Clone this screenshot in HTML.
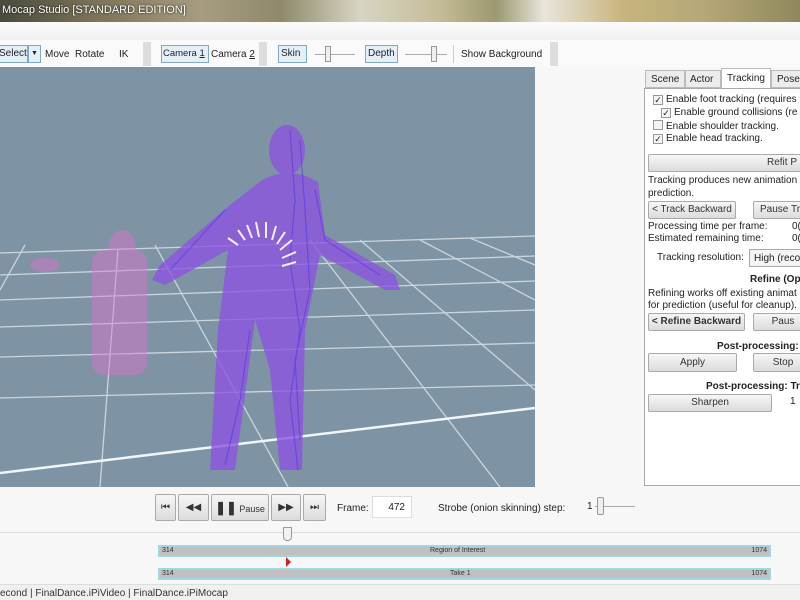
<!DOCTYPE html>
<html><head><meta charset="utf-8"><style>
*{margin:0;padding:0;box-sizing:border-box}
body{width:800px;height:600px;overflow:hidden;background:#f7f7f7;font-family:"Liberation Sans",sans-serif;font-size:10px;color:#222;position:relative}
.a{position:absolute;white-space:nowrap}
.btn{position:absolute;border:1px solid #a9a9a9;border-radius:2px;background:linear-gradient(#f6f6f6,#dcdcdc);text-align:center;color:#333;white-space:nowrap}
.tb{position:absolute;border:1px solid #7fa9c9;background:#e4f0f8;padding:2px 2px;top:45px;height:18px;line-height:12px;white-space:nowrap}
.cb{display:inline-block;width:10px;height:10px;border:1px solid #999;background:#f4f4f4;vertical-align:-1px;margin-right:3px;font-size:9px;line-height:8px;text-align:center}
</style></head><body>
<div class="a" style="left:0;top:0;width:800px;height:22px;background:linear-gradient(90deg,#4a4a3c 0%,#7c7458 12%,#a89c80 25%,#8e8a6a 35%,#d8d4c4 45%,#c4bc96 55%,#9c9870 62%,#e8e6dc 68%,#c8b47c 78%,#b4a878 88%,#90885c 100%)"></div>
<div class="a" style="left:2px;top:4px;color:#fff;font-size:11px;text-shadow:0 0 2px #000">Mocap Studio [STANDARD EDITION]</div>
<div class="a" style="left:0;top:22px;width:800px;height:18px;background:linear-gradient(#fbfbfb,#f0f0f0)"></div>
<div class="a" style="left:0;top:40px;width:800px;height:27px;background:#fafafa"></div>
<div class="tb" style="left:-4px;width:32px">Select</div>
<div class="tb" style="left:28px;width:13px;font-size:7px">▼</div>
<div class="a" style="left:45px;top:49px">Move&nbsp; Rotate</div>
<div class="a" style="left:119px;top:49px">IK</div>
<div class="a" style="left:143px;top:42px;width:8px;height:24px;background:#ddd"></div>
<div class="tb" style="left:161px;width:48px;font-size:9.5px;padding:2px 1px">Camera <u>1</u></div>
<div class="a" style="left:211px;top:49px">Camera <u>2</u></div>
<div class="a" style="left:259px;top:42px;width:8px;height:24px;background:#ddd"></div>
<div class="tb" style="left:278px;width:29px">Skin</div>
<div class="a" style="left:315px;top:54px;width:40px;height:1px;background:#aaa"></div>
<div class="a" style="left:325px;top:46px;width:6px;height:16px;border:1px solid #999;background:#eee"></div>
<div class="tb" style="left:365px;width:33px">Depth</div>
<div class="a" style="left:405px;top:54px;width:42px;height:1px;background:#aaa"></div>
<div class="a" style="left:431px;top:46px;width:6px;height:16px;border:1px solid #999;background:#eee"></div>
<div class="a" style="left:453px;top:45px;width:1px;height:18px;background:#ccc"></div>
<div class="a" style="left:461px;top:49px">Show Background</div>
<div class="a" style="left:550px;top:42px;width:8px;height:24px;background:#ddd"></div>

<svg class="a" style="left:0;top:67px" width="535" height="420" viewBox="0 67 535 420">
<rect x="0" y="67" width="535" height="420" fill="#7e93a3"/>
<g stroke="#e4ecf2" stroke-width="1.3" fill="none" opacity=".75">
<line x1="0" y1="253" x2="535" y2="236"/>
<line x1="0" y1="275" x2="535" y2="256"/>
<line x1="0" y1="300" x2="535" y2="281"/>
<line x1="0" y1="327" x2="535" y2="310"/>
<line x1="0" y1="357" x2="535" y2="343"/>
<line x1="0" y1="398" x2="535" y2="385"/>
<line x1="155" y1="245" x2="288" y2="487"/>
<line x1="25" y1="245" x2="0" y2="290"/>
<line x1="100" y1="487" x2="118" y2="250"/>
<line x1="310" y1="240" x2="500" y2="487"/>
<line x1="360" y1="240" x2="535" y2="390"/>
<line x1="420" y1="240" x2="535" y2="300"/>
<line x1="470" y1="238" x2="535" y2="265"/>
</g>
<line x1="0" y1="473" x2="535" y2="408" stroke="#f2f6f8" stroke-width="2.5"/>
<g fill="#e070d0" opacity=".45">
<ellipse cx="122" cy="250" rx="14" ry="20"/>
<rect x="92" y="250" width="55" height="125" rx="12"/>
<ellipse cx="45" cy="265" rx="15" ry="7"/>
</g>
<g fill="#8c55e0" opacity=".8">
<ellipse cx="287" cy="150" rx="18" ry="25"/>
<path d="M262 180 Q290 165 318 182 L325 235 L395 275 L400 290 L385 290 L320 255 L305 330 L302 470 L280 470 L270 370 L255 320 L235 470 L210 470 L218 330 L228 250 L165 285 L152 280 L160 265 L230 205 Z"/>
</g>
<g stroke="#4a30e8" stroke-width="1.2" opacity=".5" fill="none">
<path d="M290 130 L295 200 L290 260 L300 330 L290 400 L298 470"/>
<path d="M300 140 L305 210 L310 290 L295 360 L300 440"/>
<path d="M315 190 L325 240 L380 275"/>
<path d="M225 210 L170 270"/>
<path d="M250 330 L240 400 L225 465"/>
</g>
<g stroke="#fff" stroke-width="2" opacity=".9">
<line x1="238" y1="245" x2="228" y2="238"/><line x1="245" y1="240" x2="238" y2="230"/>
<line x1="252" y1="238" x2="247" y2="225"/><line x1="259" y1="237" x2="256" y2="222"/>
<line x1="266" y1="238" x2="266" y2="222"/><line x1="272" y1="240" x2="276" y2="226"/>
<line x1="277" y1="244" x2="285" y2="232"/><line x1="280" y1="250" x2="292" y2="240"/>
<line x1="282" y1="258" x2="296" y2="252"/><line x1="282" y1="266" x2="296" y2="262"/>
</g>
</svg>

<div class="a" style="left:645px;top:70px;width:40px;height:18px;border:1px solid #bbb;background:#ececec;padding:3px 5px">Scene</div>
<div class="a" style="left:685px;top:70px;width:36px;height:18px;border:1px solid #bbb;background:#ececec;padding:3px 4px">Actor</div>
<div class="a" style="left:721px;top:68px;width:50px;height:21px;border:1px solid #bbb;border-bottom:none;background:#fff;padding:4px 5px">Tracking</div>
<div class="a" style="left:771px;top:70px;width:40px;height:18px;border:1px solid #bbb;background:#ececec;padding:3px 5px">Pose</div>
<div class="a" style="left:644px;top:88px;width:160px;height:398px;border:1px solid #aaa;background:#fff"></div>
<div class="a" style="left:653px;top:94px"><span class="cb">✓</span>Enable foot tracking (requires</div>
<div class="a" style="left:661px;top:107px"><span class="cb">✓</span>Enable ground collisions (re</div>
<div class="a" style="left:653px;top:120px"><span class="cb"></span>Enable shoulder tracking.</div>
<div class="a" style="left:653px;top:133px"><span class="cb">✓</span>Enable head tracking.</div>
<div class="btn" style="left:648px;top:154px;width:160px;height:18px;line-height:16px;text-align:right;padding-right:10px">Refit P</div>
<div class="a" style="left:648px;top:175px">Tracking produces new animation</div>
<div class="a" style="left:648px;top:188px">prediction.</div>
<div class="btn" style="left:648px;top:201px;width:88px;height:18px;line-height:16px">&lt; Track Backward</div>
<div class="btn" style="left:753px;top:201px;width:60px;height:18px;line-height:16px;text-align:left;padding-left:6px">Pause Tra</div>
<div class="a" style="left:648px;top:221px">Processing time per frame:</div>
<div class="a" style="left:648px;top:233px">Estimated remaining time:</div>
<div class="a" style="left:792px;top:221px">0(</div><div class="a" style="left:792px;top:233px">0(</div>
<div class="a" style="left:657px;top:252px">Tracking resolution:</div>
<div class="a" style="left:749px;top:249px;width:60px;height:18px;border:1px solid #aaa;background:#f4f4f4;padding:3px 4px">High (reco</div>
<div class="a" style="left:750px;top:274px;font-weight:bold">Refine (Op</div>
<div class="a" style="left:648px;top:288px">Refining works off existing animat</div>
<div class="a" style="left:648px;top:300px">for prediction (useful for cleanup).</div>
<div class="btn" style="left:648px;top:313px;width:97px;height:18px;line-height:16px;font-weight:bold">&lt; Refine Backward</div>
<div class="btn" style="left:753px;top:313px;width:60px;height:18px;line-height:16px">Paus</div>
<div class="a" style="left:717px;top:341px;font-weight:bold">Post-processing: .</div>
<div class="btn" style="left:648px;top:353px;width:89px;height:19px;line-height:17px">Apply</div>
<div class="btn" style="left:753px;top:353px;width:60px;height:19px;line-height:17px">Stop</div>
<div class="a" style="left:706px;top:381px;font-weight:bold">Post-processing: Tra</div>
<div class="btn" style="left:648px;top:394px;width:124px;height:18px;line-height:16px">Sharpen</div>
<div class="a" style="left:790px;top:396px">1</div>

<div class="btn" style="left:155px;top:494px;width:21px;height:27px;line-height:25px;font-size:10px">⏮</div>
<div class="btn" style="left:178px;top:494px;width:31px;height:27px;line-height:25px">◀◀</div>
<div class="btn" style="left:211px;top:494px;width:58px;height:27px;line-height:25px;font-size:9px"><b style="font-size:13px">❚❚</b> Pause</div>
<div class="btn" style="left:271px;top:494px;width:30px;height:27px;line-height:25px">▶▶</div>
<div class="btn" style="left:303px;top:494px;width:23px;height:27px;line-height:25px">⏭</div>
<div class="a" style="left:337px;top:503px">Frame:</div>
<div class="a" style="left:372px;top:496px;width:40px;height:22px;border:1px solid #ddd;background:#fff;text-align:right;padding:5px 6px">472</div>
<div class="a" style="left:438px;top:503px">Strobe (onion skinning) step:</div>
<div class="a" style="left:587px;top:501px">1</div>
<div class="a" style="left:595px;top:506px;width:40px;height:1px;background:#aaa"></div>
<div class="a" style="left:597px;top:497px;width:7px;height:18px;border:1px solid #999;background:#eee;border-radius:2px"></div>
<div class="a" style="left:0;top:532px;width:800px;height:1px;background:#ddd"></div>
<div class="a" style="left:283px;top:527px;width:9px;height:14px;border:1px solid #999;background:#f2f2f2;border-radius:0 0 4px 4px"></div>
<div class="a" style="left:158px;top:545px;width:613px;height:12px;background:#c0c0c0;border:2px solid #9ed8e0;font-size:7px;line-height:8px;color:#333"><span style="position:absolute;left:2px">314</span><span style="position:absolute;left:270px">Region of Interest</span><span style="position:absolute;right:2px">1074</span></div>
<div class="a" style="left:286px;top:557px;width:0;height:0;border-top:5px solid transparent;border-bottom:5px solid transparent;border-left:5px solid #d02020"></div>
<div class="a" style="left:158px;top:568px;width:613px;height:12px;background:#c0c0c0;border:2px solid #9ed8e0;font-size:7px;line-height:8px;color:#333"><span style="position:absolute;left:2px">314</span><span style="position:absolute;left:290px">Take 1</span><span style="position:absolute;right:2px">1074</span></div>
<div class="a" style="left:0;top:584px;width:800px;height:16px;background:#f0f0f0;border-top:1px solid #ddd"></div>
<div class="a" style="left:0;top:588px;color:#333">econd&nbsp;|&nbsp;FinalDance.iPiVideo&nbsp;|&nbsp;FinalDance.iPiMocap</div>
</body></html>
